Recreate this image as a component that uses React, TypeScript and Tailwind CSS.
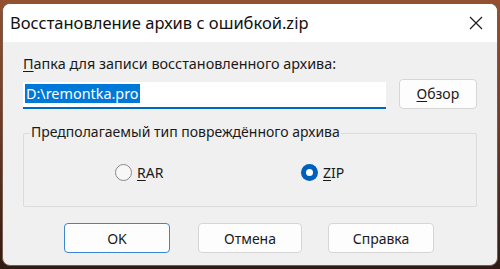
import React from "react";

const FONT = { fontFamily: '"Noto Sans", "Open Sans", sans-serif' };

function DialogButton({
  children,
  primary = false,
  className = "",
}: {
  children: React.ReactNode;
  primary?: boolean;
  className?: string;
}) {
  return (
    <button
      className={`flex h-[30px] items-center justify-center rounded-[4px] bg-[#fdfdfd] text-[14px] text-[#1a1a1a] ${
        primary ? "border border-[#3a86d0] shadow-[inset_0_0_0_1px_#ffffff]" : "border border-[#d6d6d6]"
      } ${className}`}
    >
      {children}
    </button>
  );
}

function Radio({ checked, label }: { checked?: boolean; label: React.ReactNode }) {
  return (
    <label className="flex items-center gap-[5px] text-[14px] text-[#1a1a1a]">
      {checked ? (
        <span className="flex h-[17px] w-[17px] items-center justify-center rounded-full bg-[#005fb8]">
          <span className="h-[7px] w-[7px] rounded-full bg-white" />
        </span>
      ) : (
        <span className="h-[17px] w-[17px] rounded-full border border-[#8a8a8a] bg-[#f7f7f7]" />
      )}
      <span>{label}</span>
    </label>
  );
}

export default function App() {
  return (
    <div
      className="h-[269px] w-[500px] overflow-hidden bg-gradient-to-b from-[#94512f] via-[#6b3a24] to-[#2e1b14] p-[2px] pt-[3px]"
      style={FONT}
    >
      <div className="flex h-[263px] flex-col overflow-hidden rounded-[8px] border border-[#7a5a4a] bg-[#f0f0f0]">
        {/* title bar */}
        <div className="flex h-[38px] shrink-0 items-center justify-between bg-white pl-[7px] pr-[10px]">
          <span className="text-[16.5px] leading-[22px] text-[#111]">Восстановление архив с ошибкой.zip</span>
          <svg width="14" height="14" viewBox="0 0 14 14" className="mr-[4px]">
            <path d="M1 1 L13 13 M13 1 L1 13" stroke="#1a1a1a" strokeWidth="1.2" />
          </svg>
        </div>

        <div className="flex flex-1 flex-col px-[20px] pt-[13px]">
          <div className="text-[14.4px] leading-[18px] text-[#1a1a1a]">
            <span className="underline underline-offset-2">П</span>апка для записи восстановленного архива:
          </div>

          <div className="mt-[9px] flex items-center gap-[13px]">
            <div className="flex h-[27px] w-[366px] items-start border-b-[2px] border-[#0067c0] bg-white pl-[2px] pt-[2px]">
              <span className="bg-[#0078d7] px-[1px] text-[14.4px] leading-[19px] text-white">D:\remontka.pro</span>
            </div>
            <DialogButton className="mt-[-4px] w-[79px]">
              <span className="underline underline-offset-2">О</span>бзор
            </DialogButton>
          </div>

          <div className="relative mt-[24px] h-[74px] rounded-[2px] border border-[#dcdcdc]">
            <span className="absolute left-[6px] top-[-11px] bg-[#f0f0f0] px-[1px] text-[14px] leading-[18px] text-[#1a1a1a]">
              Предполагаемый тип повреждённого архива
            </span>
            <div className="flex h-full items-center pl-[91px] pt-[4px]">
              <div className="w-[186px]">
                <Radio label={<><span className="underline underline-offset-2">R</span>AR</>} />
              </div>
              <Radio checked label={<><span className="underline underline-offset-2">Z</span>IP</>} />
            </div>
          </div>

          <div className="mt-[16px] flex pl-[41px]">
            <DialogButton primary className="w-[106px]">OK</DialogButton>
            <DialogButton className="ml-[28px] w-[104px]">Отмена</DialogButton>
            <DialogButton className="ml-[26px] w-[106px]">Справка</DialogButton>
          </div>
        </div>
      </div>
    </div>
  );
}
